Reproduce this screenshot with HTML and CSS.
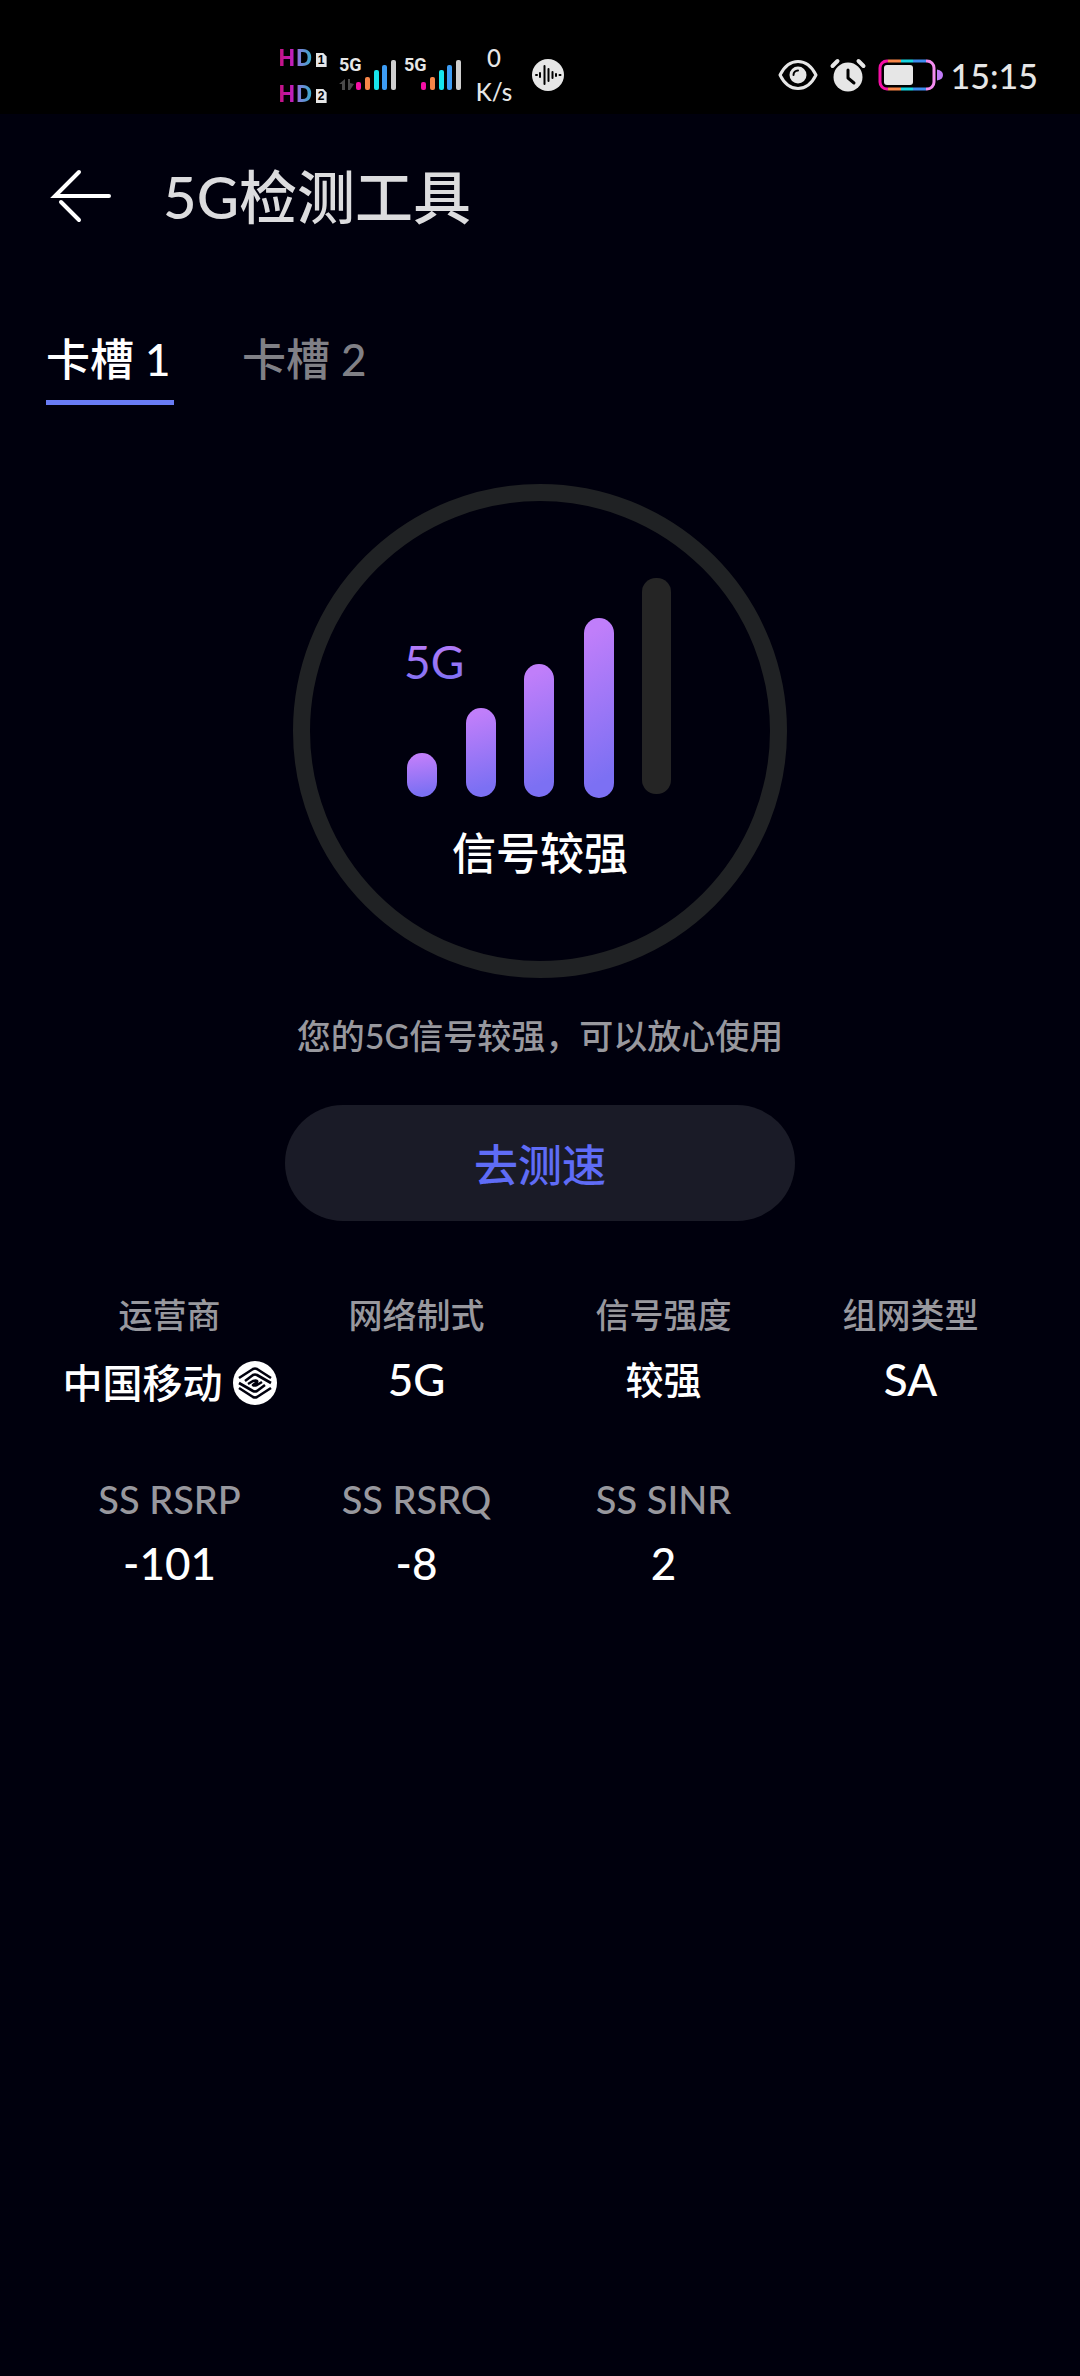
FILE: index.html
```html
<!DOCTYPE html>
<html lang="zh-CN">
<head>
    <meta charset="UTF-8">
    <meta name="viewport" content="width=device-width, initial-scale=1.0">
    <title>5G检测工具</title>
    <link rel="stylesheet" href="styles.css">
</head>
<body>
    <div class="status-bar">
        <div class="status-left">
            <div class="hd-list">
                <div class="hd"><span class="hd-text">HD</span><span class="sim">1</span></div>
                <div class="hd"><span class="hd-text">HD</span><span class="sim">2</span></div>
            </div>
            <div class="net">
                <span class="net-type">5G</span>
                <svg width="58" height="32" viewBox="0 0 58 32">
                    <path d="M6 20v11H3v-6H0zM9 20h2v4l4 1-4 6H9z" fill="#4a4a4a"/>
                    <rect x="17" y="23" width="5" height="8" rx="2" fill="#f50fa5"/>
                    <rect x="26" y="18" width="5" height="13" rx="2" fill="#f78648"/>
                    <rect x="35" y="11" width="5" height="20" rx="2" fill="#17e5ee"/>
                    <rect x="43" y="6" width="5" height="25" rx="2" fill="#3d9df5"/>
                    <rect x="52" y="1" width="5" height="30" rx="2" fill="#cfcfcf"/>
                </svg>
            </div>
            <div class="net">
                <span class="net-type">5G</span>
                <svg width="58" height="32" viewBox="0 0 58 32">
                    <rect x="17" y="23" width="5" height="8" rx="2" fill="#f50fa5"/>
                    <rect x="26" y="18" width="5" height="13" rx="2" fill="#f78648"/>
                    <rect x="35" y="11" width="5" height="20" rx="2" fill="#17e5ee"/>
                    <rect x="43" y="6" width="5" height="25" rx="2" fill="#3d9df5"/>
                    <rect x="52" y="1" width="5" height="30" rx="2" fill="#cfcfcf"/>
                </svg>
            </div>
            <div class="speed"><span>0</span><span>K/s</span></div>
            <svg width="32" height="32" viewBox="0 0 32 32">
                <circle cx="16" cy="16" r="16" fill="#e6e6e6"/>
                <path d="M4 16h1M8 14v4M12.500 7v18M16.500 10v12M20.500 13v6M24 15v2M27.500 16h1" stroke="#000" stroke-width="2" stroke-linecap="round"/>
            </svg>
        </div>
        <div class="status-right">
            <svg width="40" height="34" viewBox="0 0 40 34" fill="none">
                <path d="M2 17C7 7 13 3.500 20 3.500S33 7 38 17C33 27 27 30.500 20 30.500S7 27 2 17z" stroke="#e6e6e6" stroke-width="3" stroke-linejoin="round"/>
                <circle cx="20" cy="17" r="8.500" fill="#e6e6e6"/>
                <path d="M15.500 17a4.500 4.500 0 0 1 4.500-4.500" stroke="#000" stroke-width="2" stroke-linecap="round"/>
            </svg>
            <svg width="36" height="34" viewBox="0 0 36 34" fill="none">
                <circle cx="18" cy="19" r="14.500" fill="#e6e6e6"/>
                <path d="M2.500 8l5-5M33.500 8l-5-5" stroke="#e6e6e6" stroke-width="4" stroke-linecap="round"/>
                <path d="M18 12v8l6 5" stroke="#000" stroke-width="3" stroke-linecap="round" stroke-linejoin="round"/>
            </svg>
            <svg class="battery" width="65" height="34" viewBox="0 0 65 34" fill="none">
                <defs>
                    <linearGradient id="batteryFrame">
                        <stop offset=".14" stop-color="#f50fa5"/>
                        <stop offset=".14" stop-color="#f78648"/>
                        <stop offset=".38" stop-color="#f78648"/>
                        <stop offset=".38" stop-color="#17d5e0"/>
                        <stop offset=".62" stop-color="#17d5e0"/>
                        <stop offset=".62" stop-color="#3d8df0"/>
                        <stop offset=".86" stop-color="#3d8df0"/>
                        <stop offset=".86" stop-color="#f48cf0"/>
                    </linearGradient>
                </defs>
                <rect x="2" y="3" width="54" height="28" rx="7" stroke="url(#batteryFrame)" stroke-width="3"/>
                <rect x="6" y="7" width="29" height="20" rx="3" fill="#e6e6e6"/>
                <path d="M59 11.500q6 1 6 5.500t-6 5.500z" fill="#c17bf8"/>
            </svg>
            <span class="clock">15:15</span>
        </div>
    </div>

    <header class="header">
        <button class="back-btn" aria-label="返回">
            <svg width="60" height="54" viewBox="0 0 60 54" fill="none" stroke="#fff" stroke-width="4" stroke-linecap="round">
                <path d="M28 2L4 26h54M10 32l18 18"/>
            </svg>
        </button>
        <h1>5G检测工具</h1>
    </header>

    <nav class="tabs">
        <a href="#" class="tab active">卡槽 1</a>
        <a href="#" class="tab">卡槽 2</a>
    </nav>

    <main class="content">
        <div class="signal">
            <svg width="266" height="222" viewBox="0 0 266 222">
                <defs>
                    <linearGradient id="bar" x1="0" y1="0" x2=".1" y2="1">
                        <stop offset=".1" stop-color="#c07efa"/>
                        <stop offset=".95" stop-color="#7c70f3"/>
                    </linearGradient>
                </defs>
                <text class="signal-type" x="-3" y="101" fill="url(#bar)">5G</text>
                <rect x="0" y="175" width="30" height="44" rx="15" fill="url(#bar)"/>
                <rect x="59" y="130" width="30" height="89" rx="15" fill="url(#bar)"/>
                <rect x="117" y="86" width="30" height="133" rx="15" fill="url(#bar)"/>
                <rect x="177" y="40" width="30" height="180" rx="15" fill="url(#bar)"/>
                <rect x="235" y="0" width="29" height="216" rx="14" fill="#252525"/>
            </svg>
            <p class="signal-text">信号较强</p>
        </div>
        <p class="tip">您的5G信号较强，可以放心使用</p>
        <button class="speed-btn">去测速</button>

        <dl class="info">
            <div class="item">
                <dt>运营商</dt>
                <dd class="carrier">中国移动
                    <svg width="44" height="44" viewBox="0 0 44 44" fill="none">
                        <circle cx="22" cy="22" r="22" fill="#fff"/>
                        <g stroke="#00000d" stroke-width="2.600" stroke-linejoin="round">
                            <path d="M6 17L20 8q2-1 4 0l14 9"/>
                            <path d="M12 20l8-6q2-1 4 0l14 8"/>
                            <path d="M15 23l5-3q3-1 4 0t-4 4q1 1 4 0l5-3"/>
                            <path d="M38 27L24 36q-2 1-4 0L6 27"/>
                            <path d="M32 24l-8 6q-2 1-4 0L6 22"/>
                        </g>
                    </svg>
                </dd>
            </div>
            <div class="item">
                <dt>网络制式</dt>
                <dd class="latin">5G</dd>
            </div>
            <div class="item">
                <dt>信号强度</dt>
                <dd>较强</dd>
            </div>
            <div class="item">
                <dt>组网类型</dt>
                <dd class="latin">SA</dd>
            </div>
            <div class="item">
                <dt class="latin">SS RSRP</dt>
                <dd class="latin">-101</dd>
            </div>
            <div class="item">
                <dt class="latin">SS RSRQ</dt>
                <dd class="latin">-8</dd>
            </div>
            <div class="item">
                <dt class="latin">SS SINR</dt>
                <dd class="latin">2</dd>
            </div>
        </dl>
    </main>
</body>
</html>
```
FILE: styles.css
```css
* {
    box-sizing: border-box;
}

body {
    margin: 0;
    min-height: 100vh;
    background: #00000d;
    color: #fff;
    font-family: Lato, "Noto Sans CJK SC", sans-serif;
    font-weight: 500;
}

h1, p, dl, dd {
    margin: 0;
}

svg {
    display: block;
    flex: none;
    overflow: visible;
}

button {
    border: none;
    font-family: inherit;
    font-weight: inherit;
    cursor: pointer;
}

/* status bar */
.status-bar {
    display: flex;
    justify-content: space-between;
    height: 114px;
    padding: 35px 42px 0 278px;
    background: #000;
    color: #e6e6e6;
}

.status-left, .status-right {
    display: flex;
    align-items: center;
    height: 80px;
}

.hd-list {
    display: flex;
    flex-direction: column;
    gap: 8px;
    width: 61px;
}

.hd {
    display: flex;
    align-items: flex-end;
    gap: 3px;
    height: 28px;
}

.hd-text {
    font: bold 23px/28px "Open Sans", sans-serif;
    background: linear-gradient(90deg, #c4107c, #c01fc0 45%, #7f7fd8 60%, #2fb0c8);
    -webkit-background-clip: text;
    background-clip: text;
    color: transparent;
}

.sim {
    width: 11px;
    height: 14px;
    margin-bottom: 4px;
    background: #e6e6e6;
    clip-path: polygon(0 0, 70% 0, 100% 25%, 100% 100%, 0 100%);
    color: #000;
    font: bold 12px/14px "Liberation Sans", sans-serif;
    text-align: center;
}

.net {
    position: relative;
    width: 65px;
}

.net-type {
    position: absolute;
    top: -4px;
    left: 0;
    font: bold 18px/20px Roboto, sans-serif;
}

.speed {
    display: flex;
    flex-direction: column;
    width: 50px;
    margin-right: 13px;
    font-size: 24px;
    line-height: 34px;
    text-align: center;
}

.status-right {
    gap: 12px;
}

.battery {
    margin-right: -4px;
}

.clock {
    font-size: 34px;
}

/* title */
.header {
    display: flex;
    align-items: center;
    gap: 52px;
    height: 166px;
    padding: 0 51px;
}

.back-btn {
    padding: 0;
    background: none;
}

h1 {
    color: #dcdcde;
    font-size: 58px;
    font-weight: 500;
    line-height: 80px;
}

/* tabs */
.tabs {
    display: flex;
    gap: 68px;
    padding: 44px 46px 0;
}

.tab {
    min-width: 128px;
    padding-bottom: 6px;
    border-bottom: 5px solid transparent;
    color: #808086;
    font-size: 44px;
    line-height: 70px;
    text-decoration: none;
}

.tab.active {
    color: #fff;
    border-image: linear-gradient(#697cf5, #697cf5) 1;
}

/* signal */
.content {
    display: flex;
    flex-direction: column;
    align-items: center;
    padding: 79px 46px;
}

.signal {
    display: flex;
    flex-direction: column;
    align-items: center;
    width: 494px;
    height: 494px;
    padding-top: 77px;
    border: 17px solid #202224;
    border-radius: 50%;
}

.signal-type {
    font-size: 46px;
    font-weight: 400;
}

.signal-text {
    margin-top: 20px;
    font-size: 44px;
    line-height: 66px;
}

.tip {
    margin-top: 34px;
    color: #98989e;
    font-size: 34px;
    line-height: 48px;
}

.speed-btn {
    width: 510px;
    height: 116px;
    margin-top: 45px;
    border-radius: 58px;
    background: #1a1b27;
    color: #5f6cf6;
    font-size: 44px;
}

/* network info */
.info {
    display: grid;
    grid-template-columns: repeat(4, 1fr);
    row-gap: 48px;
    width: 100%;
    margin-top: 68px;
}

.item {
    display: flex;
    flex-direction: column;
    align-items: center;
    gap: 4px;
    height: 136px;
    white-space: nowrap;
}

dt {
    color: #98989e;
    font-size: 34px;
    line-height: 52px;
}

dd {
    font-size: 38px;
    line-height: 68px;
}

dt.latin {
    font-size: 38px;
}

dd.latin {
    font-size: 44px;
}

.carrier {
    display: flex;
    align-items: center;
    gap: 10px;
    font-size: 40px;
    line-height: 76px;
}
```
